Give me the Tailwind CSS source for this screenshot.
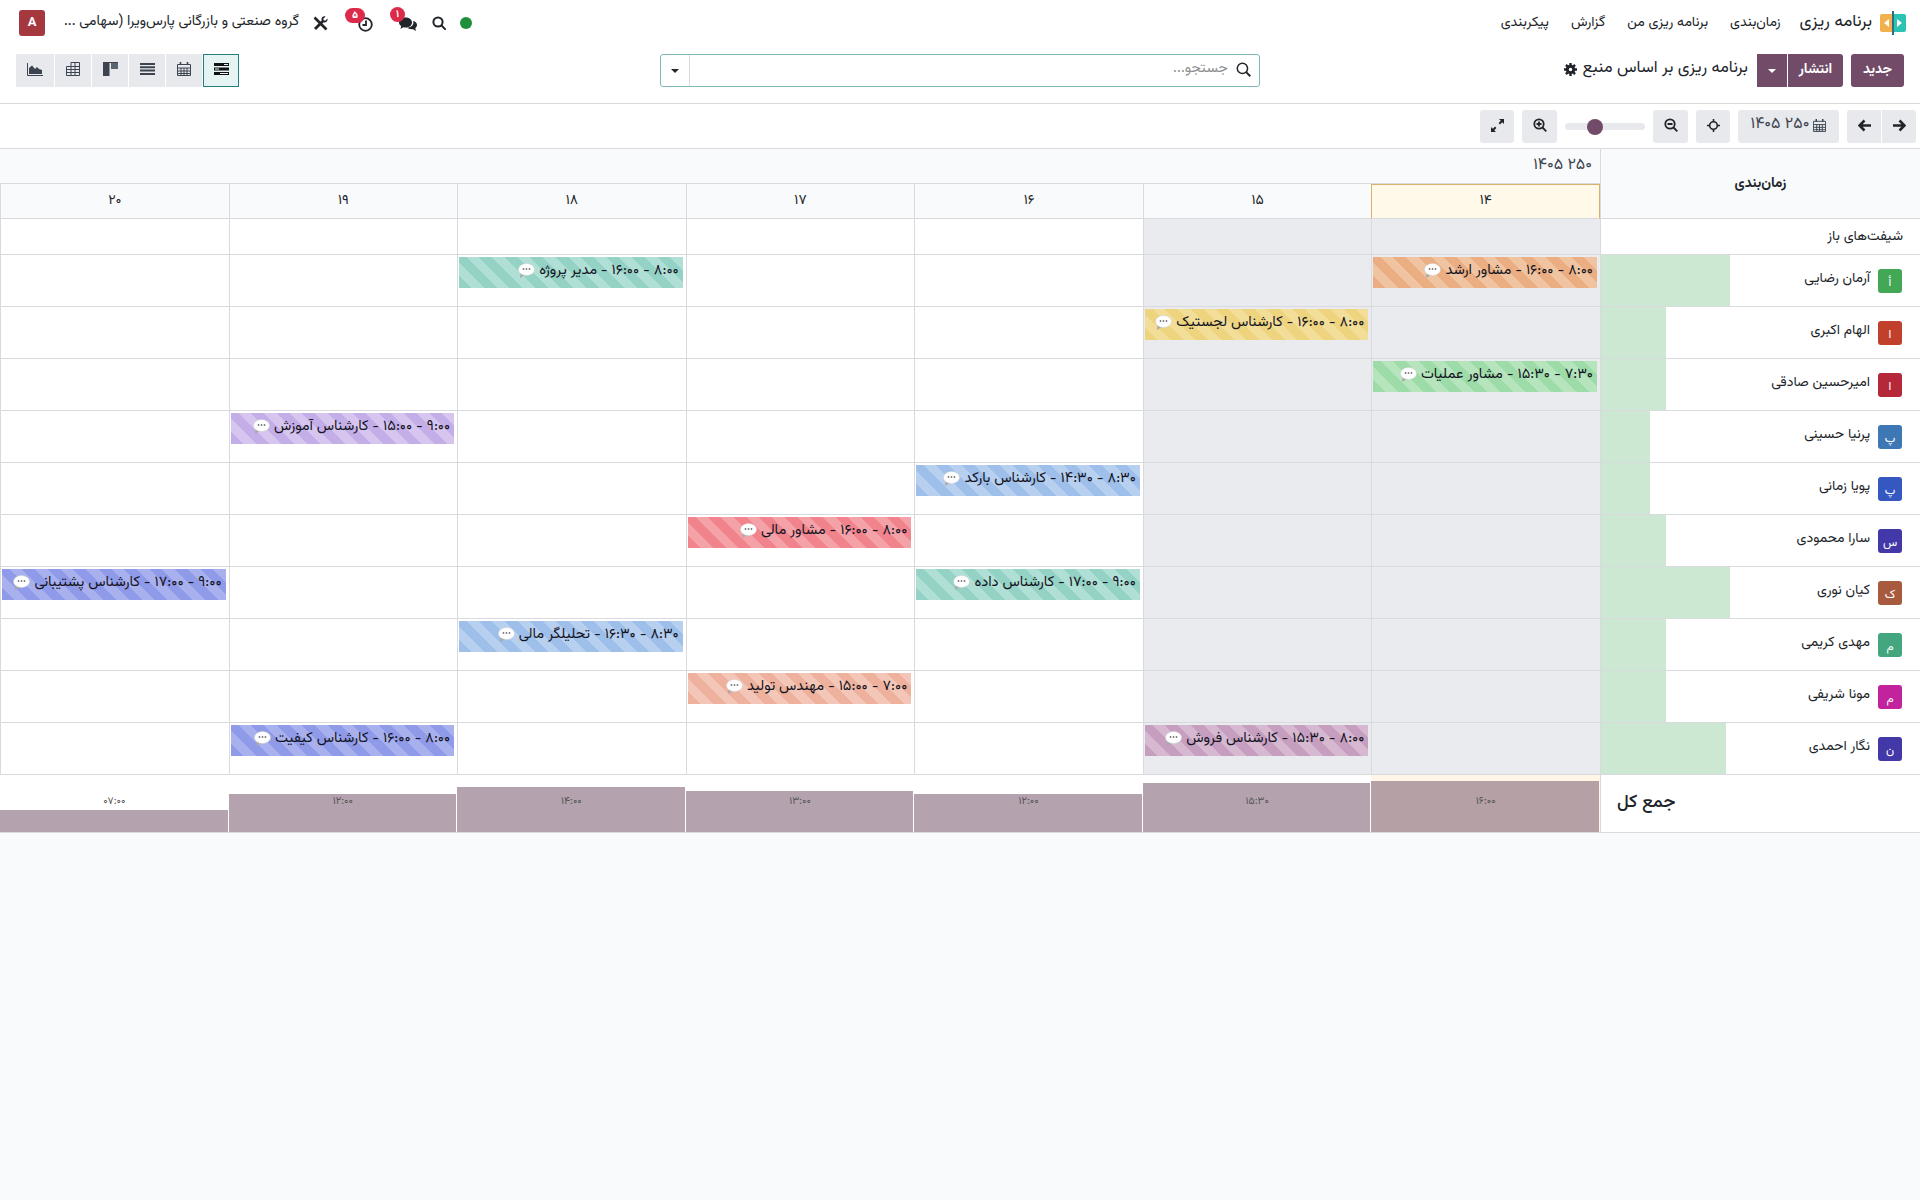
<!DOCTYPE html>
<html lang="fa" dir="rtl">
<head>
  <meta charset="UTF-8" />
  <title>برنامه ریزی</title>
  <script src="https://cdn.jsdelivr.net/npm/@tailwindcss/browser@4"></script>
</head>
<body class="bg-[#f8fafb] text-[#212529] text-sm font-['Vazirmatn','Noto_Sans','DejaVu_Sans',sans-serif]">
  <!-- top nav -->
  <header class="h-[46px] bg-white flex items-center justify-between pr-[13px] pl-[19px]">
    <nav class="flex items-center">
      <svg class="w-[28px] h-[24px]" viewBox="0 0 28 24">
        <path d="M14 3H3a2 2 0 0 0-2 2v14a2 2 0 0 0 2 2h11z" fill="#f3b14d" />
        <path d="M14 3h11a2 2 0 0 1 2 2v14a2 2 0 0 1-2 2H14z" fill="#2bc4b4" />
        <path d="M10 8v8l-5-4zM18 8v8l5-4z" fill="#fff" />
        <rect x="13" y="0" width="2" height="24" fill="#2a6f86" />
      </svg>
      <span class="text-[17px] mr-[7px] ml-[19px] -mt-[1px]">برنامه ریزی</span>
      <span class="ml-[22px] -mt-[1px]">زمان‌بندی</span>
      <span class="ml-[22px] -mt-[1px]">برنامه ریزی من</span>
      <span class="ml-[22px] -mt-[1px]">گزارش</span>
      <span class="-mt-[1px]">پیکربندی</span>
    </nav>
    <div class="flex items-center text-[#212529]">
      <span class="w-[12px] h-[12px] rounded-full bg-[#1f8f3a] ml-[14px]"></span>
      <svg class="w-[14px] h-[14px] ml-[15px]" viewBox="0 0 14 14" fill="none" stroke="#212529" stroke-width="2"><circle cx="6" cy="6" r="4.600" /><path d="M9.500 9.500l3.600 3.600" stroke-linecap="round" /></svg>
      <div class="relative ml-[26px]">
        <svg class="w-[18px] h-[14px] block mt-[2px]" viewBox="0 0 18 14" fill="#212529"><path d="M0 5.500C0 2.500 2.800.5 6.500.5S13 2.500 13 5.500 10.200 10.500 6.500 10.500c-.8 0-1.500-.1-2.200-.3L1.500 12l.7-3C.8 8.100 0 6.900 0 5.500z" /><path d="M14.200 3.800C16.400 4.500 18 6.100 18 8c0 1.300-.7 2.400-1.700 3.200l.7 2.800-3-1.800c-2.400.4-4.600-.3-5.700-1.600 3.700-.1 7.100-2.700 5.900-6.800z" /></svg>
        <span class="absolute -top-[8px] right-[12px] w-[15px] h-[15px] rounded-full bg-[#dc2a4b] text-white text-[10px] font-bold leading-[15px] text-center">۱</span>
      </div>
      <div class="relative ml-[30px]">
        <svg class="w-[15px] h-[15px] block mt-[2px]" viewBox="0 0 15 15" fill="none" stroke="#212529" stroke-width="1.800"><circle cx="7.500" cy="7.500" r="6.300" /><path d="M8 3.500V8H4.500" /></svg>
        <span class="absolute -top-[7px] right-[8px] w-[20px] h-[15px] rounded-full bg-[#dc2a4b] text-white text-[10px] font-bold leading-[15px] text-center">۵</span>
      </div>
      <svg class="w-[15px] h-[15px] ml-[14px]" viewBox="0 0 15 15" fill="none" stroke="#212529"><path d="M1.500 1.500l12 12" stroke-width="2.600" /><path d="M2 13L9.500 5.500" stroke-width="2.800" /><path d="M14.500 2.500l-2.200 2.200-1.600-.4-.4-1.600L12.500.5C10.500-.2 8.300 1.200 8.500 3.600L9 6l2.200.6c2.300.2 3.800-2 3.300-4.100z" fill="#212529" stroke="none" /></svg>
      <span class="text-[14.200px] -mt-[1px]">گروه صنعتی و بازرگانی پارس‌ویرا (سهامی ...</span>
      <span class="w-[26px] h-[26px] rounded-[3px] bg-[#a5373f] text-white text-[13px] font-bold flex items-center justify-center mr-[19px]">A</span>
    </div>
  </header>

  <!-- toolbar -->
  <div class="h-[58px] bg-white border-b border-[#d8dadd] grid grid-cols-[1fr_600px_1fr] items-start pt-[8px] pr-[16px] pl-[16px]">
    <div class="flex items-center">
      <button class="h-[33px] w-[53px] pb-[2px] rounded-[3px] bg-[#714b67] text-white text-[14px] font-bold">جدید</button>
      <button class="h-[33px] w-[56px] pb-[2px] mr-[8px] rounded-r-[3px] bg-[#714b67] text-white text-[14px] font-bold border-l border-white">انتشار</button>
      <button class="h-[33px] w-[30px] bg-[#714b67] flex items-center justify-center"><span class="border-x-[4px] border-x-transparent border-t-[4px] border-t-white"></span></button>
      <span class="text-[16.500px] mr-[9px] -mt-[3px]">برنامه ریزی بر اساس منبع</span>
      <svg class="w-[13px] h-[13px] mr-[6px] -mt-[2px]" viewBox="0 0 12 12"><circle cx="6" cy="6" r="3" fill="none" stroke="#212529" stroke-width="2.800" /><path d="M6 0v12M0 6h12M1.800 1.800l8.400 8.400M10.200 1.800l-8.400 8.400" stroke="#212529" stroke-width="2.200" stroke-dasharray="2.200 7.600" /></svg>
    </div>
    <div class="h-[33px] bg-white border border-[#7fb7ba] rounded-[3px] flex items-center">
      <svg class="w-[15px] h-[15px] mr-[8px] -mt-[3px]" viewBox="0 0 14 14" fill="none" stroke="#212529" stroke-width="1.400"><circle cx="6" cy="6" r="4.800" /><path d="M9.500 9.500l3.800 3.800" stroke-width="1.800" /></svg>
      <span class="flex-1 text-[#8f8f8f] text-[14.400px] mr-[8px] -mt-[2px]">جستجو...</span>
      <span class="w-[29px] h-full border-r border-[#d8dadd] flex items-center justify-center"><span class="border-x-[4px] border-x-transparent border-t-[4px] border-t-[#212529]"></span></span>
    </div>
    <div class="flex justify-end gap-[1px]">
      <button class="w-[36px] h-[33px] pb-[3px] bg-[#e6f3f3] border border-[#21807f] flex items-center justify-center">
        <svg class="w-[15px] h-[12px]" viewBox="0 0 15 12" fill="#111"><path d="M0 0h15v3H0zM0 4.500h15v3H0zM0 9h15v3H0z" /><path d="M10 1h4v1h-4zM1 5.500h4v1H1zM6 10h8v1H6z" fill="#e6f3f3" /></svg>
      </button>
      <button class="w-[36px] h-[33px] pb-[3px] bg-[#e7e9ed] flex items-center justify-center">
        <svg class="w-[14px] h-[14px]" viewBox="0 0 14 14" fill="none" stroke="#3d4450"><path d="M.5 2.500h13v11H.5zM.5 6h13M.5 9h13M.5 11.500h13M4 6v7.500M7 6v7.500M10 6v7.500" /><path d="M3.500 0v3M10.500 0v3" stroke-width="1.600" /></svg>
      </button>
      <button class="w-[36px] h-[33px] pb-[3px] bg-[#e7e9ed] flex items-center justify-center">
        <svg class="w-[15px] h-[12px]" viewBox="0 0 15 12" fill="#3d4450"><path d="M0 0h15v2H0zM0 3.300h15v2H0zM0 6.600h15v2H0zM0 10h15v2H0z" /></svg>
      </button>
      <button class="w-[36px] h-[33px] pb-[3px] bg-[#e7e9ed] flex items-center justify-center">
        <svg class="w-[15px] h-[14px]" viewBox="0 0 15 14" fill="#3d4450"><path d="M0 0h15v1H0zM0 1h6.500v13H0z" /><path d="M8 1h7v6H8z" fill="#5c6470" /></svg>
      </button>
      <button class="w-[36px] h-[33px] pb-[3px] bg-[#e7e9ed] flex items-center justify-center">
        <svg class="w-[14px] h-[14px]" viewBox="0 0 14 14" fill="none" stroke="#3d4450"><path d="M5 .5h8.500v13H.5v-9h13M.5 7.500h13M.5 10.500h13M5 .5v13M9 .5v13" /></svg>
      </button>
      <button class="w-[38px] h-[33px] pb-[3px] bg-[#e7e9ed] flex items-center justify-center">
        <svg class="w-[16px] h-[13px]" viewBox="0 0 16 13"><path d="M.5 0v12.500H16" fill="none" stroke="#3d4450" /><path d="M2 11V5l3-2.500L8 6l2-2 2 2 3 1v4z" fill="#3d4450" /></svg>
      </button>
    </div>
  </div>

  <!-- gantt controls -->
  <div class="h-[45px] bg-white border-b border-[#d8dadd] flex items-center pr-[4px] pt-[1px]">
    <div class="flex gap-[1px]">
      <button class="w-[34px] h-[33px] pb-[3px] bg-[#e7e9ed] rounded-r-[3px] flex items-center justify-center">
        <svg class="w-[13px] h-[13px]" viewBox="0 0 13 12" fill="none" stroke="#212529" stroke-width="2.600"><path d="M0 6h11M6.500 1L11.500 6l-5 5" /></svg>
      </button>
      <button class="w-[34px] h-[33px] pb-[3px] bg-[#e7e9ed] rounded-l-[3px] flex items-center justify-center">
        <svg class="w-[13px] h-[13px]" viewBox="0 0 13 12" fill="none" stroke="#212529" stroke-width="2.600"><path d="M13 6H2M6.500 1L1.500 6l5 5" /></svg>
      </button>
    </div>
    <button class="w-[101px] h-[33px] pb-[2px] mr-[8px] bg-[#e7e9ed] rounded-[3px] flex items-center justify-center gap-[4px]">
      <svg class="w-[13px] h-[13px]" viewBox="0 0 14 14" fill="none" stroke="#3d4450"><path d="M.5 2.500h13v11H.5zM.5 6h13M.5 9h13M.5 11.500h13M4 6v7.500M7 6v7.500M10 6v7.500" /><path d="M3.500 0v3M10.500 0v3" stroke-width="1.600" /></svg>
      <span class="text-[16px] text-[#3d4450]">۲۵۰ ۱۴۰۵</span>
    </button>
    <button class="w-[34px] h-[33px] pb-[3px] mr-[8px] bg-[#e7e9ed] rounded-[3px] flex items-center justify-center">
      <svg class="w-[13px] h-[13px]" viewBox="0 0 13 13" fill="none" stroke="#212529" stroke-width="1.600"><circle cx="6.500" cy="6.500" r="3.800" /><path d="M6.500 0v3M6.500 10v3M0 6.500h3M10 6.500h3" /></svg>
    </button>
    <button class="w-[35px] h-[33px] pb-[3px] mr-[8px] bg-[#e7e9ed] rounded-[3px] flex items-center justify-center">
      <svg class="w-[14px] h-[14px]" viewBox="0 0 14 14" fill="none" stroke="#212529" stroke-width="1.800"><circle cx="6" cy="6" r="4.700" /><path d="M9.500 9.500l3.800 3.800M3.500 6h5" /></svg>
    </button>
    <div class="w-[80px] h-[7px] mr-[8px] rounded-full bg-[#e7e9ed] relative">
      <span class="absolute -top-[4.500px] left-[22px] w-[16px] h-[16px] rounded-full bg-[#714b67]"></span>
    </div>
    <button class="w-[35px] h-[33px] pb-[3px] mr-[8px] bg-[#e7e9ed] rounded-[3px] flex items-center justify-center">
      <svg class="w-[14px] h-[14px]" viewBox="0 0 14 14" fill="none" stroke="#212529" stroke-width="1.800"><circle cx="6" cy="6" r="4.700" /><path d="M9.500 9.500l3.800 3.800M3.500 6h5M6 3.500v5" /></svg>
    </button>
    <button class="w-[34px] h-[33px] pb-[2px] mr-[8px] bg-[#e7e9ed] rounded-[3px] flex items-center justify-center">
      <svg class="w-[13px] h-[13px]" viewBox="0 0 13 13" fill="#212529"><path d="M8 0h5v5l-1.800-1.800L9 5.400 7.600 4l2.200-2.200zM5 13H0V8l1.800 1.800L4 7.600 5.400 9l-2.200 2.200z" /></svg>
    </button>
  </div>

  <!-- gantt table -->
  <div id="gantt" class="bg-white border-b border-[#d8dadd]">
    <div class="grid grid-cols-[320px_repeat(7,minmax(0,1fr))]">
      <div class="row-span-2 bg-[#f8fafb] border-l border-b border-[#d8dadd] flex items-center justify-center font-bold text-[14px]">زمان‌بندی</div>
      <div class="col-span-7 h-[35px] bg-[#f8fafb] border-b border-[#d8dadd] pr-[8px] flex items-center text-[16px] text-[#3d4450]">۲۵۰ ۱۴۰۵</div>
      <div id="days" class="contents"></div>
    </div>
    <div id="rows"></div>
    <div id="totals" class="grid grid-cols-[320px_repeat(7,minmax(0,1fr))] h-[57px]"></div>
  </div>

  <script>
    const days = ['۱۴', '۱۵', '۱۶', '۱۷', '۱۸', '۱۹', '۲۰'];

    const colors = {
      orange: ['#eaae82', '#f0c4a0'],
      teal: ['#93d2c4', '#afdfd5'],
      yellow: ['#eed47f', '#f3de99'],
      green: ['#9ddba8', '#b5e4bd'],
      lavender: ['#c4aee8', '#d6c6ef'],
      blue: ['#9dbfe9', '#b7d0ef'],
      red: ['#f0838b', '#f4a2a8'],
      indigo: ['#8f9ae8', '#a8b1ee'],
      salmon: ['#eeb19d', '#f3c6b7'],
      mauve: ['#c69fc0', '#d6b8d1'],
    };

    const people = [
      { name: 'آرمان رضایی', letter: 'أ', color: '#43a856', load: 129, shifts: { 0: ['۸:۰۰ - ۱۶:۰۰ - مشاور ارشد', 'orange'], 4: ['۸:۰۰ - ۱۶:۰۰ - مدیر پروژه', 'teal'] } },
      { name: 'الهام اکبری', letter: 'ا', color: '#c0402c', load: 65, shifts: { 1: ['۸:۰۰ - ۱۶:۰۰ - کارشناس لجستیک', 'yellow'] } },
      { name: 'امیرحسین صادقی', letter: 'ا', color: '#b5283a', load: 65, shifts: { 0: ['۷:۳۰ - ۱۵:۳۰ - مشاور عملیات', 'green'] } },
      { name: 'پرنیا حسینی', letter: 'پ', color: '#3d78b5', load: 49, shifts: { 5: ['۹:۰۰ - ۱۵:۰۰ - کارشناس آموزش', 'lavender'] } },
      { name: 'پویا زمانی', letter: 'پ', color: '#3558c0', load: 49, shifts: { 2: ['۸:۳۰ - ۱۴:۳۰ - کارشناس بارکد', 'blue'] } },
      { name: 'سارا محمودی', letter: 'س', color: '#4338a8', load: 65, shifts: { 3: ['۸:۰۰ - ۱۶:۰۰ - مشاور مالی', 'red'] } },
      { name: 'کیان نوری', letter: 'ک', color: '#a85a3f', load: 129, shifts: { 2: ['۹:۰۰ - ۱۷:۰۰ - کارشناس داده', 'teal'], 6: ['۹:۰۰ - ۱۷:۰۰ - کارشناس پشتیبانی', 'indigo'] } },
      { name: 'مهدی کریمی', letter: 'م', color: '#43a67f', load: 65, shifts: { 4: ['۸:۳۰ - ۱۶:۳۰ - تحلیلگر مالی', 'blue'] } },
      { name: 'مونا شریفی', letter: 'م', color: '#c2239c', load: 65, shifts: { 3: ['۷:۰۰ - ۱۵:۰۰ - مهندس تولید', 'salmon'] } },
      { name: 'نگار احمدی', letter: 'ن', color: '#4338a8', load: 125, shifts: { 1: ['۸:۰۰ - ۱۵:۳۰ - کارشناس فروش', 'mauve'], 5: ['۸:۰۰ - ۱۶:۰۰ - کارشناس کیفیت', 'indigo'] } },
    ];

    const totals = [['۱۶:۰۰', 51], ['۱۵:۳۰', 49], ['۱۲:۰۰', 38], ['۱۳:۰۰', 41], ['۱۴:۰۰', 45], ['۱۲:۰۰', 38], ['۰۷:۰۰', 22]];

    const bubble = `<svg class="w-[17px] h-[15px] mb-[5px] mr-[4px] shrink-0" viewBox="0 0 17 15"><path d="M2.500 10l-.5 5 5-3z" fill="#a9a9a9" /><ellipse cx="8.500" cy="6.500" rx="8" ry="6" fill="#fff" stroke="#d4d4d4" stroke-width=".6" /><circle cx="5.500" cy="6" r=".9" fill="#777" /><circle cx="8.500" cy="6" r=".9" fill="#777" /><circle cx="11.500" cy="6" r=".9" fill="#777" /></svg>`;

    // day headers
    document.getElementById('days').innerHTML = days.map((d, i) => i === 0
      ? `<div class="h-[35px] pb-[2px] bg-[#fff9ea] border-t border-x border-b border-t-[#d9b26e] border-x-[#d9b26e] border-b-[#d8dadd] flex items-center justify-center text-[14px]">${d}</div>`
      : `<div class="h-[35px] bg-[#f8fafb] border-l border-b border-[#d8dadd] flex items-center justify-center text-[14px]">${d}</div>`
    ).join('');

    function dayCells(shifts) {
      return days.map((_, i) => {
        const shift = shifts[i];
        const bg = i < 2 ? 'bg-[#e9ebef]' : 'bg-white';
        let pill = '';
        if (shift) {
          const [c1, c2] = colors[shift[1]];
          pill = `<div class="h-[31px] mt-[2px] mr-[3px] ml-[1px] pr-[4px] flex items-center text-[14.600px] text-[#14141f] whitespace-nowrap overflow-hidden" style="background:repeating-linear-gradient(45deg,${c1},${c1} 9px,${c2} 9px,${c2} 18px)"><span class="-mt-[3px]">${shift[0]}</span>${bubble}</div>`;
        }
        return `<div class="${bg} border-l border-[#d8dadd]">${pill}</div>`;
      }).join('');
    }

    const rowsHtml = [`<div class="grid grid-cols-[320px_repeat(7,minmax(0,1fr))] h-[36px] border-b border-[#d8dadd]">
      <div class="border-l border-[#d8dadd] pr-[17px] flex items-center text-[14px]">شیفت‌های باز</div>${dayCells({})}</div>`];

    people.forEach(p => {
      rowsHtml.push(`<div class="grid grid-cols-[320px_repeat(7,minmax(0,1fr))] h-[52px] border-b border-[#d8dadd]">
        <div class="border-l border-[#d8dadd] flex">
          <div class="flex-1 flex items-center pr-[18px]">
            <span class="w-[24px] h-[24px] rounded-[3px] text-white text-[12px] flex items-end justify-center ml-[8px]" style="background:${p.color}">${p.letter}</span>
            <span class="text-[14px] -mt-[3px]">${p.name}</span>
          </div>
          <div class="bg-[#cde8d2]" style="width:${p.load}px"></div>
        </div>${dayCells(p.shifts)}</div>`);
    });
    document.getElementById('rows').innerHTML = rowsHtml.join('');

    document.getElementById('totals').innerHTML =
      `<div class="border-l border-[#d8dadd] flex items-center justify-end pl-[16px] text-[18px] font-medium">جمع کل</div>` +
      totals.map(([label, h], i) => `<div class="relative flex items-end pr-[1px] ${i === 0 ? 'bg-[#fff6e8]' : ''}">
        <div class="w-full ${i === 0 ? 'bg-[#b5a0a5]' : 'bg-[#b4a2ae]'}" style="height:${h}px"></div>
        <span class="absolute inset-x-0 top-[20px] text-center text-[10.500px] leading-[14px] text-[#555]">${label}</span>
      </div>`).join('');
  </script>
</body>
</html>
